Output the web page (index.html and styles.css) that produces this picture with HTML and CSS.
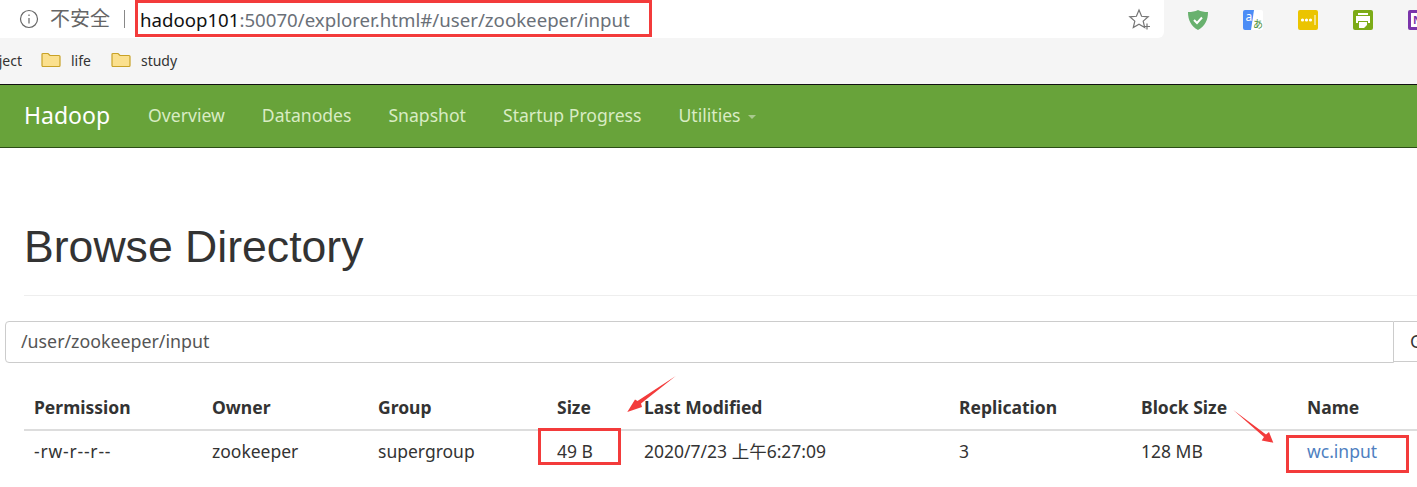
FILE: index.html
```html
<!DOCTYPE html>
<html lang="en">
<head>
  <meta charset="UTF-8">
  <title>Browsing HDFS</title>
  <link rel="stylesheet" href="styles.css">
</head>
<body>
  <div class="toolbar">
    <div class="omnibox">
      <svg class="info" width="20" height="20" viewBox="0 0 20 20"><circle cx="10" cy="10" r="8.500" fill="none" stroke="#666" stroke-width="1.2"/><path d="M10 9v5.500M10 5.500v1.500" stroke="#666" stroke-width="1.2"/></svg>
      <span class="insecure">不安全</span>
      <span class="sep"></span>
      <span class="url"><span class="host">hadoop101</span>:50070/explorer.html#/user/zookeeper/input</span>
      <svg class="star" width="24" height="24" viewBox="0 0 24 24"><path d="M12 3l2.600 6.300 6.600.5-5 4.300 1.500 6.500L12 17.200l-5.700 3.400 1.500-6.500-5-4.300 6.600-.5z" fill="none" stroke="#757575" stroke-width="1.2"/><path d="M17 19.500h6M20 16.500v6" stroke="#757575" stroke-width="1.2"/></svg>
    </div>
    <div class="extensions">
      <svg width="20" height="20" viewBox="0 0 20 20"><path d="M10 0c3 1.500 6 2 10 2 0 8-3 14-10 18C3 16 0 10 0 2c4 0 7-.5 10-2z" fill="#68b16e"/><path d="M6 10l3 3 5-5.500" fill="none" stroke="#fff" stroke-width="2"/></svg>
      <svg width="20" height="20" viewBox="0 0 20 20"><rect width="20" height="20" rx="2" fill="#fff"/><path d="M2 0h9l-3 20H2a2 2 0 0 1-2-2V2a2 2 0 0 1 2-2z" fill="#4c8df6"/><text x="2.500" y="11" class="ext-a">a</text><text x="10" y="18" class="ext-b">あ</text></svg>
      <svg width="20" height="20" viewBox="0 0 20 20"><rect width="20" height="20" rx="2" fill="#ebc400"/><circle cx="4.500" cy="10" r="1.600" fill="#fff"/><circle cx="8.500" cy="10" r="1.600" fill="#fff"/><circle cx="12.500" cy="10" r="1.600" fill="#fff"/><path d="M17 5v10" stroke="#fff"/></svg>
      <svg width="20" height="20" viewBox="0 0 20 20"><rect width="20" height="20" rx="2" fill="#7cab17"/><path d="M5 3h10v2H5zM3 6h14v7h-2v-2H5v2H3zM6 12h8v3l-3 3H6z" fill="#fff"/></svg>
      <svg width="20" height="20" viewBox="0 0 20 20"><rect width="20" height="20" rx="2" fill="#7b34ab"/><rect x="3" y="3" width="17" height="14" fill="#fff"/><text x="5" y="14" class="ext-n">N</text></svg>
    </div>
  </div>
  <div class="bookmarks">
    <span class="cut">Project</span>
    <span class="bookmark">
      <svg width="20" height="16" viewBox="0 0 20 16"><path d="M1 2.500A1 1 0 0 1 2 1.500h5l2 2h9a1 1 0 0 1 1 1v9a1 1 0 0 1-1 1H2a1 1 0 0 1-1-1z" fill="#fbe08e" stroke="#c9a227" stroke-width="1.200"/></svg>
      life
    </span>
    <span class="bookmark">
      <svg width="20" height="16" viewBox="0 0 20 16"><path d="M1 2.500A1 1 0 0 1 2 1.500h5l2 2h9a1 1 0 0 1 1 1v9a1 1 0 0 1-1 1H2a1 1 0 0 1-1-1z" fill="#fbe08e" stroke="#c9a227" stroke-width="1.200"/></svg>
      study
    </span>
  </div>

  <nav class="navbar">
    <a class="brand">Hadoop</a>
    <a class="nav-link">Overview</a>
    <a class="nav-link">Datanodes</a>
    <a class="nav-link">Snapshot</a>
    <a class="nav-link">Startup Progress</a>
    <a class="nav-link">Utilities <span class="caret"></span></a>
  </nav>

  <div class="page-header">
    <h1>Browse Directory</h1>
  </div>

  <div class="path-row">
    <div class="path-input">/user/zookeeper/input</div>
    <div class="go-btn">Go!</div>
  </div>

  <table class="files">
    <thead>
      <tr>
        <th class="c-perm">Permission</th>
        <th class="c-owner">Owner</th>
        <th class="c-group">Group</th>
        <th class="c-size">Size</th>
        <th class="c-mod">Last Modified</th>
        <th class="c-rep">Replication</th>
        <th class="c-block">Block Size</th>
        <th class="c-name">Name</th>
      </tr>
    </thead>
    <tbody>
      <tr>
        <td class="perm-value">-rw-r--r--</td>
        <td>zookeeper</td>
        <td>supergroup</td>
        <td>49 B</td>
        <td>2020/7/23 上午6:27:09</td>
        <td>3</td>
        <td>128 MB</td>
        <td><a class="file-link">wc.input</a></td>
      </tr>
    </tbody>
  </table>

  <!-- red annotations drawn on top of the screenshot -->
  <div class="mark mark-url"></div>
  <div class="mark mark-size"></div>
  <div class="mark mark-name"></div>
  <svg class="arrows" width="1417" height="487" viewBox="0 0 1417 487">
    <path d="M675.700 376L641 403.500 642 407 627.300 412 635 399.500 637.500 401z" fill="#f33b3b"/>
    <path d="M1233.300 410L1266 434.500 1269 432 1273.300 442.700 1261.700 440.500 1264 437z" fill="#f33b3b"/>
  </svg>
</body>
</html>
```

FILE: styles.css
```css
html, body { margin: 0; padding: 0; height: 487px; overflow: hidden; background: #fff; }
body { position: relative; font-family: "Noto Sans", "Noto Sans CJK SC", sans-serif; font-size: 16px; color: #333; }

.toolbar { display: flex; height: 41px; background: #f5f5f5; }
.omnibox { display: flex; flex: none; align-items: center; width: 1164px; height: 38px; background: #fff; border-radius: 0 0 6px 0; padding-left: 19px; box-sizing: border-box; }
.insecure { margin-left: 11px; font-size: 20px; line-height: 24px; color: #666; }
.sep { width: 1px; height: 18px; background: #888; margin: 0 15px 0 14px; }
.url { flex: 1; font-size: 18.65px; color: #6a7078; }
.host { color: #111; }
.star { margin-right: 13px; }
.extensions { display: flex; gap: 35px; padding: 10px 0 0 24px; }
.extensions svg { flex: none; }
.ext-a { font-size: 12px; fill: #fff; }
.ext-b { font-size: 10px; fill: #4a8f3a; }
.ext-n { font-size: 11px; font-weight: bold; fill: #7b34ab; }

.bookmarks { display: flex; align-items: center; height: 43px; padding-bottom: 5px; box-sizing: border-box; background: #f5f5f5; font-size: 14px; color: #333; }
.cut { width: 22px; direction: rtl; overflow: hidden; white-space: nowrap; margin-right: 19px; }
.bookmark { display: flex; align-items: center; gap: 10px; margin-right: 20px; }

.navbar { display: flex; align-items: center; height: 64px; padding-bottom: 2px; box-sizing: border-box; background: #68a33a; border-top: 1px solid #111; border-bottom: 1px solid #2c4d16; }
.brand { color: #fff; font-size: 23px; padding: 0 19.5px 0 24px; }
.nav-link { color: #d9ecc4; font-size: 17.6px; padding: 0 18.5px; }
.caret { display: inline-block; margin-left: 3px; vertical-align: middle; border-top: 4px solid #a9c98e; border-left: 4px solid transparent; border-right: 4px solid transparent; }

.page-header { margin: 0 0 25px 24px; height: 148px; border-bottom: 1px solid #eee; box-sizing: border-box; }
h1 { margin: 0; padding-top: 73px; font-family: "Liberation Sans", sans-serif; font-size: 44.6px; font-weight: 400; line-height: 52px; color: #333; }

.path-row { display: flex; margin-left: 5px; height: 42px; }
.path-input { width: 1389px; height: 42px; box-sizing: border-box; flex: none; border: 1px solid #ccc; border-radius: 4px 0 0 4px; padding: 0 15px; line-height: 38px; font-size: 17.8px; color: #555; }
.go-btn { flex: none; width: 60px; box-sizing: border-box; border: 1px solid #ccc; border-left: 0; padding-left: 16px; line-height: 39px; height: 41px; font-size: 17.6px; }

.files { border-collapse: collapse; table-layout: fixed; width: 1423px; margin: 22px 0 0 24px; }
.files th { text-align: left; font-size: 17.5px; font-weight: 700; height: 44px; padding: 0 10px; border-bottom: 2px solid #ddd; }
.files td { height: 42px; padding: 0 10px 2px; box-sizing: border-box; font-size: 17.5px; }
.c-perm { width: 158px; }
.c-owner { width: 146px; }
.c-group { width: 159px; }
.c-size { width: 67px; }
.c-mod { width: 295px; }
.c-rep { width: 162px; }
.c-block { width: 146px; }
.c-name { width: 130px; }
.files .perm-value { letter-spacing: .8px; }
.file-link { color: #4f7fc1; }

.mark { position: absolute; box-sizing: border-box; border: 3px solid #f33b3b; }
.mark-url { left: 135px; top: 0; width: 517px; height: 37px; }
.mark-size { left: 538px; top: 428px; width: 83px; height: 37px; }
.mark-name { left: 1286px; top: 435px; width: 123px; height: 38px; }
.arrows { position: absolute; left: 0; top: 0; }
```
